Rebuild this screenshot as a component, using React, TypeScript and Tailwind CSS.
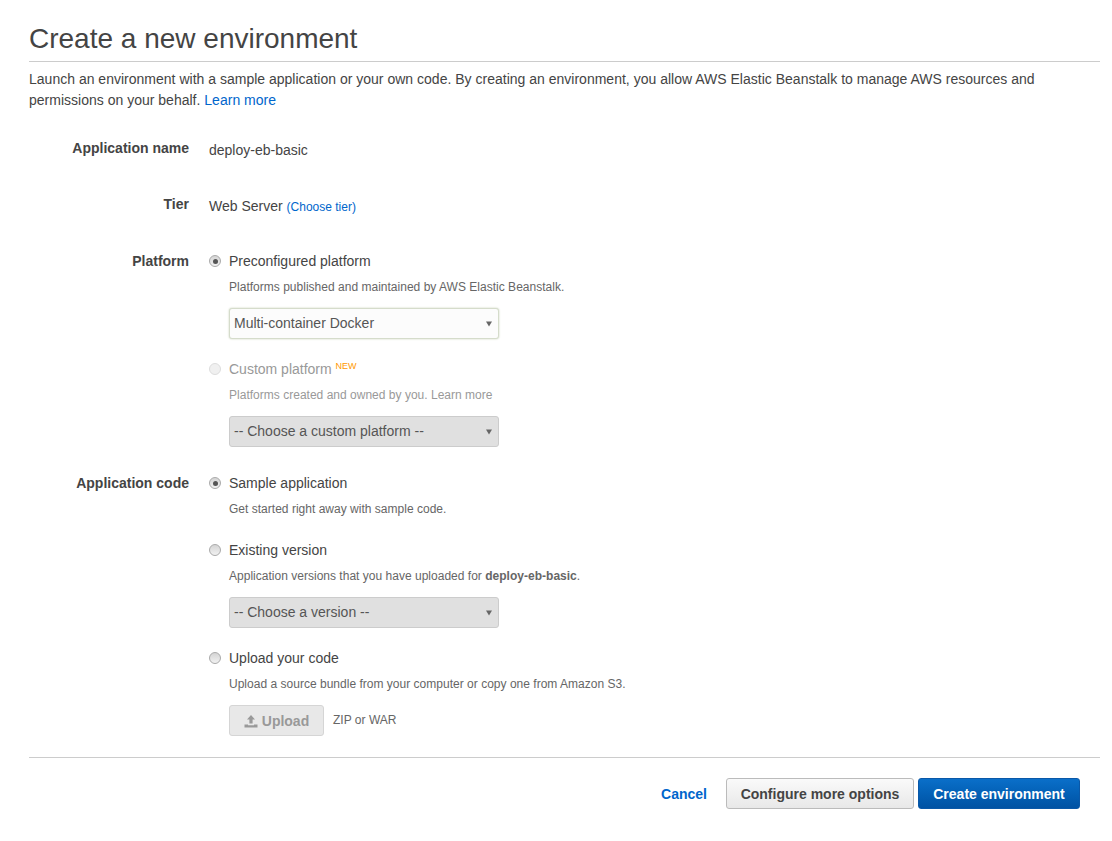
// App.tsx
import React from 'react';

function Radio({ checked, disabled }: { checked?: boolean; disabled?: boolean }) {
  return (
    <span
      className={`flex h-3 w-3 shrink-0 items-center justify-center rounded-full border ${
        disabled ? 'border-[#dddddd] bg-[#f0f0f0]' : 'border-[#aaaaaa] bg-gradient-to-b from-[#d4d4d4] to-[#f2f2f2]'
      }`}
    >
      {checked && <span className="h-[5px] w-[5px] rounded-full bg-[#555555]" />}
    </span>
  );
}

function Select({ label, active }: { label: string; active?: boolean }) {
  return (
    <div
      className={`flex h-[31px] w-[270px] items-center justify-between rounded-[3px] border pl-1 pr-[6px] text-[14px] text-[#555555] ${
        active
          ? 'border-[#d5dccb] bg-[#fcfcfc] shadow-[0_0_2px_#c4ceb4]'
          : 'border-[#cccccc] bg-[#e0e0e0]'
      }`}
    >
      <span>{label}</span>
      <svg width="6" height="6" viewBox="0 0 6 6" fill="#666666">
        <path d="M0 0.5 H6 L3 5.5 Z" />
      </svg>
    </div>
  );
}

function Row({ label, children, className }: { label: string; children: React.ReactNode; className?: string }) {
  return (
    <div className={`flex ${className ?? ''}`}>
      <div className="w-[160px] shrink-0 text-right text-[14px] font-bold leading-5 text-[#444444]">{label}</div>
      <div className="ml-5 flex-1">{children}</div>
    </div>
  );
}

function RadioLine({ label, checked, disabled }: { label: React.ReactNode; checked?: boolean; disabled?: boolean }) {
  return (
    <div className="flex h-5 items-center">
      <Radio checked={checked} disabled={disabled} />
      <span className={`ml-2 text-[14px] ${disabled ? 'text-[#999999]' : 'text-[#444444]'}`}>{label}</span>
    </div>
  );
}

function Hint({ children, disabled }: { children: React.ReactNode; disabled?: boolean }) {
  return (
    <p className={`ml-5 mt-[7px] text-[12px] leading-[18px] tracking-[0.015px] ${disabled ? 'text-[#999999]' : 'text-[#666666]'}`}>{children}</p>
  );
}

export default function App() {
  return (
    <div className="min-h-[841px] bg-white pl-[29px] pr-3 pt-[21px] font-['Liberation_Sans','Open_Sans',sans-serif] text-[#444444]">
      <h1 className="border-b border-[#cccccc] pb-[4px] text-[28px] font-normal leading-[36px]">Create a new environment</h1>
      <p className="mt-[7px] text-[14px] leading-[21px] tracking-[0.008px]">
        Launch an environment with a sample application or your own code. By creating an environment, you allow AWS Elastic Beanstalk to manage AWS resources and permissions on your behalf.{' '}
        <a href="#" className="text-[#0066cc]">Learn more</a>
      </p>

      <Row label="Application name" className="mt-[27px]">
        <div className="pt-[2px] text-[14px] leading-5">deploy-eb-basic</div>
      </Row>

      <Row label="Tier" className="mt-[34px]">
        <div className="pt-[2px] text-[14px] leading-5">
          Web Server <a href="#" className="text-[12px] text-[#0066cc]">(Choose tier)</a>
        </div>
      </Row>

      <Row label="Platform" className="mt-[34px]">
        <RadioLine label="Preconfigured platform" checked />
        <Hint>Platforms published and maintained by AWS Elastic Beanstalk.</Hint>
        <div className="ml-5 mt-3"><Select label="Multi-container Docker" active /></div>
        <div className="mt-5">
          <RadioLine
            disabled
            label={
              <>
                Custom platform <sup className="relative top-[1px] align-super text-[9px] font-normal text-[#ff9900]">NEW</sup>
              </>
            }
          />
        </div>
        <Hint disabled>Platforms created and owned by you. Learn more</Hint>
        <div className="ml-5 mt-3"><Select label="-- Choose a custom platform --" /></div>
      </Row>

      <Row label="Application code" className="mt-[26px]">
        <RadioLine label="Sample application" checked />
        <Hint>Get started right away with sample code.</Hint>
        <div className="mt-[22px]"><RadioLine label="Existing version" /></div>
        <Hint>
          Application versions that you have uploaded for <b>deploy-eb-basic</b>.
        </Hint>
        <div className="ml-5 mt-3"><Select label="-- Choose a version --" /></div>
        <div className="mt-5"><RadioLine label="Upload your code" /></div>
        <Hint>Upload a source bundle from your computer or copy one from Amazon S3.</Hint>
        <div className="ml-5 mt-3 flex items-start">
          <button className="flex h-[31px] w-[95px] items-center justify-center rounded-[3px] border border-[#d5d5d5] bg-[#e8e8e8] pt-px text-[14px] font-bold text-[#999999]">
            <svg width="14" height="13" viewBox="0 0 14 13" className="mr-1" fill="#999999">
              <path d="M7 0 L11 4.5 H8.6 V8.5 H5.4 V4.5 H3 Z" />
              <path d="M0.5 9.5 H4 V10.3 H10 V9.5 H13.5 V12.5 H0.5 Z" />
            </svg>
            Upload
          </button>
          <span className="ml-[9px] mt-[6px] text-[12px] leading-[18px] tracking-[0.015px] text-[#666666]">ZIP or WAR</span>
        </div>
      </Row>

      <div className="mt-[21px] flex items-center justify-end border-t border-[#cccccc] pr-5 pt-5">
        <a href="#" className="mr-[19px] pt-px text-[14px] font-bold text-[#0066cc]">Cancel</a>
        <button className="h-[31px] w-[188px] rounded-[3px] border border-[#bbbbbb] bg-gradient-to-b from-[#fafafa] to-[#e8e8e8] pt-px text-[14px] font-bold text-[#444444]">
          Configure more options
        </button>
        <button className="ml-1 h-[31px] w-[162px] rounded-[3px] border border-[#0a58a8] bg-gradient-to-b from-[#0a6fc9] to-[#0052a3] pt-px text-[14px] font-bold text-white">
          Create environment
        </button>
      </div>
    </div>
  );
}
